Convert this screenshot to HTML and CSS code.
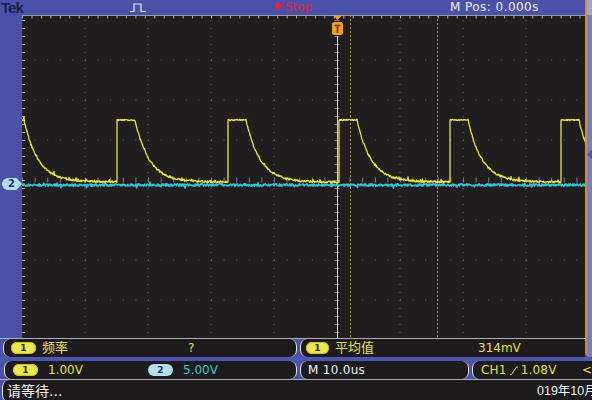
FILE: index.html
```html
<!DOCTYPE html>
<html lang="zh">
<head>
<meta charset="utf-8">
<title>Tek</title>
<link rel="stylesheet" href="styles.css">
</head>
<body>
<div class="scope">
  <header class="topbar">
    <span class="brand">Tek</span>
    <svg class="trig-icon" viewBox="0 0 16 10" width="16" height="10"><polyline points="0,8.5 4,8.5 4,1 11,1 11,8.5 16,8.5"/></svg>
    <span class="run"><span class="dot"></span>Stop</span>
    <span class="mpos">M Pos: 0.000s</span>
  </header>

  <div class="left-strip"><span class="ch2-marker">2</span></div>

  <div class="graticule">
    <svg class="grid-svg" viewBox="0 0 563 323" width="563" height="323">
      <path class="vdots" d="M63 5V323 M126 5V323 M189 5V323 M252 5V323 M378 5V323 M441 5V323 M504 5V323"/>
      <path class="hdots" d="M0 45H563 M0 85H563 M0 125H563 M0 205H563 M0 245H563 M0 285H563"/>
      <path class="axis-v" d="M315 5V323"/>
      <path class="axis-h" d="M0 165H563"/>
      <path class="edge-line" d="M0 0.5H563"/>
      <path class="edge-top" d="M0 2H563"/>
      <path class="edge-left" d="M1.5 5V323"/>
      <path class="cursor" d="M328.5 0V323 M415.5 0V323"/>
      <path class="trigpos" d="M315.5 21V323"/>
      <path id="ch2" class="ch2" d=""/>
      <path id="ch1" class="ch1" d=""/>
      <polygon class="tmark" points="311,0.5 320,0.5 315.5,5"/>
      <rect class="tmark" x="310" y="7" width="11" height="13" rx="2.5"/>
      <path class="tmark-t" d="M312.5 10.5H318.5 M315.5 10.5V18"/>
    </svg>
  </div>

  <aside class="menu-edge"><span class="trig-level"></span></aside>

  <div class="sep"></div>

  <div class="row meas">
    <div class="seg seg-freq">
      <span class="pill pill-1">1</span>
      <span class="txt-y">频率</span>
      <span class="txt-y">?</span>
    </div>
    <div class="seg seg-mean">
      <span class="pill pill-1">1</span>
      <span class="txt-y">平均值</span>
      <span class="txt-y">314mV</span>
    </div>
  </div>

  <div class="band"></div>

  <div class="row settings">
    <div class="seg seg-ch">
      <span class="pill pill-1">1</span>
      <span class="txt-y">1.00V</span>
      <span class="pill pill-2">2</span>
      <span class="txt-c">5.00V</span>
    </div>
    <div class="seg seg-time">
      <span class="txt-w">M 10.0us</span>
    </div>
    <div class="seg seg-trig">
      <span class="txt-y trig-read">CH1 <svg class="slope" viewBox="0 0 8 9" width="8" height="9"><polyline points="0,8.5 1.5,8.5 6.5,1 8,1"/></svg> 1.08V</span>
      <span class="txt-y">&lt;</span>
    </div>
  </div>

  <div class="sep sep-full"></div>

  <div class="row status">
    <div class="seg seg-status">
      <span class="txt-w wait">请等待...</span>
      <span class="txt-w date">019年10月</span>
    </div>
  </div>
</div>
<script src="script.js"></script>
</body>
</html>
```

FILE: styles.css
```css
* {
  box-sizing: border-box;
  margin: 0;
  padding: 0;
}

body {
  margin: 0;
  width: 592px;
  height: 400px;
  overflow: hidden;
  background: #4b51a8;
  font-family: "DejaVu Sans", "Noto Sans CJK SC", sans-serif;
  font-size: 12px;
}

.scope {
  display: grid;
  grid-template-columns: 22px 563px 7px;
  grid-template-rows: 15px 323px 1px 18px 4px 18px 1px 22px;
  width: 592px;
  height: 400px;
}

/* top bar */
.topbar {
  grid-column: 1 / 3;
  grid-row: 1;
  display: grid;
  grid-template-columns: 128px 145px 175px 1fr;
  align-items: center;
  padding-left: 1px;
  background: #4b51a8;
  line-height: 15px;
}

.brand {
  font-family: "Liberation Sans", sans-serif;
  font-weight: bold;
  font-size: 15px;
  color: #1a2050;
  letter-spacing: -1px;
}

.trig-icon {
  display: block;
  margin-top: 1px;
  margin-left: 1px;
}

.trig-icon polyline {
  fill: none;
  stroke: #ececf4;
  stroke-width: 1.2;
}

.run {
  display: flex;
  align-items: center;
  gap: 4px;
  margin-left: 1px;
  color: #d42a4c;
}

.dot {
  width: 6px;
  height: 6px;
  border-radius: 50%;
  background: #ff1c24;
  margin-top: -4px;
}

.mpos {
  color: #f0f0f6;
  letter-spacing: 0.45px;
  margin-left: 1px;
}

/* left strip */
.left-strip {
  grid-column: 1;
  grid-row: 2;
  position: relative;
  background: #4b51a8;
}

.ch2-marker {
  position: absolute;
  left: 2px;
  top: 163px;
  width: 20px;
  height: 12px;
  background: #b4e0ec;
  color: #1e2c66;
  font-size: 10px;
  font-weight: bold;
  line-height: 12px;
  padding-left: 6px;
  border-radius: 6px 0 0 6px;
  clip-path: polygon(0 0, 72% 0, 100% 50%, 72% 100%, 0 100%);
}

/* graticule */
.graticule {
  grid-column: 2;
  grid-row: 2;
  background: #211e1f;
  overflow: hidden;
}

.grid-svg {
  display: block;
}

.grid-svg path {
  fill: none;
}

.vdots {
  stroke: #747474;
  stroke-width: 1;
  stroke-dasharray: 1 7;
}

.hdots {
  stroke: #747474;
  stroke-width: 1;
  stroke-dasharray: 1 11.6;
}

.axis-v {
  stroke: #808080;
  stroke-width: 5;
  stroke-dasharray: 1 7;
}

.axis-h {
  stroke: #808080;
  stroke-width: 5;
  stroke-dasharray: 1 11.6;
}

.edge-line {
  stroke: #9a9aa4;
  stroke-width: 1;
}

.edge-top {
  stroke: #b0b0b0;
  stroke-width: 3;
  stroke-dasharray: 1 8.45;
}

.edge-left {
  stroke: #a8a8a8;
  stroke-width: 3;
  stroke-dasharray: 1 7;
}

.cursor {
  stroke: #a89a3c;
  stroke-width: 1;
  stroke-dasharray: 2 2;
}

.trigpos {
  stroke: #d4d4d4;
  stroke-width: 1;
}

.ch1 {
  stroke: #e8e63e;
  stroke-width: 1.3;
  stroke-linejoin: round;
}

.ch2 {
  stroke: #36c2d2;
  stroke-width: 1.5;
  stroke-linejoin: round;
}

.tmark {
  fill: #f2a022;
}

.grid-svg .tmark-t {
  stroke: #6a3a08;
  stroke-width: 1.6;
}

/* right menu edge */
.menu-edge {
  grid-column: 3;
  grid-row: 1 / 5;
  position: relative;
  background: linear-gradient(#9aa8de 0, #9aa8de 15px, #6f82cc 15px);
  border-left: 2px solid #e8862a;
  border-bottom-left-radius: 6px;
}

.trig-level {
  position: absolute;
  left: 0;
  top: 150px;
  width: 5px;
  height: 9px;
  background: #3c56c4;
  clip-path: polygon(0 50%, 100% 0, 100% 100%);
}

/* separators */
.sep {
  grid-column: 1 / 3;
  grid-row: 3;
  background: #aeaeba;
}

.sep-full {
  grid-column: 1 / 4;
  grid-row: 7;
}

.band {
  grid-column: 1 / 4;
  grid-row: 5;
  background: #4d56b0;
}

/* rows */
.row {
  display: flex;
  gap: 3px;
  background: #4b51a8;
  line-height: 18px;
}

.meas {
  grid-column: 1 / 3;
  grid-row: 4;
  padding-left: 3px;
}

.settings {
  grid-column: 1 / 4;
  grid-row: 6;
  padding-left: 4px;
}

.status {
  grid-column: 1 / 4;
  grid-row: 8;
  padding-left: 2px;
  line-height: 20px;
}

.seg {
  display: grid;
  align-items: center;
  background: #1d1b1c;
  border-left: 1px solid #e4e4ea;
  border-right: 1px solid #e4e4ea;
  border-radius: 7px;
  white-space: nowrap;
}

.seg-freq {
  width: 294px;
  padding-left: 7px;
  grid-template-columns: 25px 140px auto;
  column-gap: 6px;
}

.seg-mean {
  flex: 1;
  padding-left: 5px;
  grid-template-columns: 23px 137px auto;
  column-gap: 6px;
  border-right: none;
  border-radius: 7px 0 0 7px;
}

.seg-ch {
  width: 293px;
  padding-left: 8px;
  grid-template-columns: 25px 90px 25px auto;
  column-gap: 10px;
}

.seg-time {
  width: 169px;
  padding-left: 7px;
}

.seg-trig {
  flex: 1;
  padding-left: 8px;
  grid-template-columns: 1fr auto;
  border-right: none;
  border-radius: 7px 0 0 7px;
}

.seg-status {
  flex: 1;
  padding-left: 4px;
  grid-template-columns: 530px 1fr;
  border-right: none;
  border-radius: 7px 0 0 7px;
  overflow: hidden;
}

.pill {
  height: 12px;
  border-radius: 6px;
  font-size: 9px;
  font-weight: bold;
  line-height: 12px;
  text-align: center;
}

.pill-1 {
  background: #ede64c;
  color: #2a2a20;
  box-shadow: inset 0 0 0 1px #c8c030;
}

.pill-2 {
  background: #b4e0ec;
  color: #1e2c66;
}

.txt-y {
  color: #e6e04a;
}

.txt-c {
  color: #3ec4de;
}

.txt-w {
  color: #f0f0f2;
}

.seg-freq .txt-y:nth-child(2),
.seg-mean .txt-y:nth-child(2) {
  font-size: 13px;
}

.trig-read {
  display: flex;
  align-items: center;
  gap: 3px;
  letter-spacing: 0.2px;
}

.slope polyline {
  fill: none;
  stroke: #e6e04a;
  stroke-width: 1;
}

.seg-time .txt-w {
  letter-spacing: 0.3px;
}

.wait {
  font-size: 14px;
}

.date {
  font-family: "Liberation Sans", "Noto Sans CJK SC", sans-serif;
  font-size: 12.5px;
}
```

FILE: script.js
```js
(function () {
  var seed = 12345;
  function rnd() {
    seed = (seed * 16807) % 2147483647;
    return (seed - 1) / 2147483646;
  }

  var X0 = 22, Y0 = 15;
  var HIGH = 120, LOW = 182, PERIOD = 111, START = 6, TOP = 18, TAU = 14;

  function phase(x) {
    return ((x - START) % PERIOD + PERIOD) % PERIOD;
  }

  function ch1(x) {
    var t = phase(x);
    if (t < TOP) return HIGH;
    return LOW - (LOW - HIGH) * Math.exp(-(t - TOP) / TAU);
  }

  var d1 = '';
  var prevT = null;
  for (var x = 22; x <= 586; x += 0.5) {
    var t = phase(x);
    var base = ch1(x);
    var amp = t < TOP ? 1.2 : 2.0;
    var n = (rnd() - 0.5) * amp;
    if (t >= TOP && rnd() < 0.06) n -= rnd() * 3;
    var lx = (x - X0).toFixed(1);
    var ly = (base + n - Y0).toFixed(1);
    if (prevT !== null && t < prevT) {
      d1 += ' L' + lx + ' ' + (LOW - Y0).toFixed(1);
    }
    d1 += (d1 ? ' L' : 'M') + lx + ' ' + ly;
    prevT = t;
  }

  var d2 = '';
  for (var x2 = 22; x2 <= 586; x2 += 0.5) {
    var n2 = (rnd() - 0.5) * 2.6;
    if (rnd() < 0.05) n2 += (rnd() - 0.5) * 5;
    var y2 = 185 + n2;
    d2 += (d2 ? ' L' : 'M') + (x2 - X0).toFixed(1) + ' ' + (y2 - Y0).toFixed(1);
  }

  document.getElementById('ch1').setAttribute('d', d1);
  document.getElementById('ch2').setAttribute('d', d2);
})();
```
